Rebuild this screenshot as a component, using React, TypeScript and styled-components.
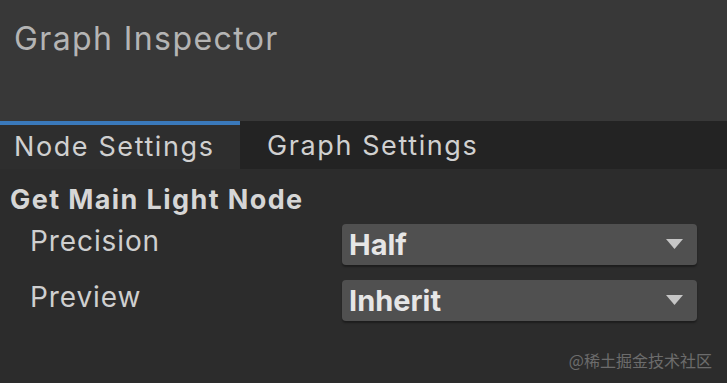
import React from "react";
import styled, { createGlobalStyle } from "styled-components";

const GlobalStyle = createGlobalStyle`
  html, body {
    margin: 0;
    padding: 0;
    background: #2c2c2c;
  }
  body {
    font-family: Inter, "Noto Sans", sans-serif;
  }
`;

const rows = [
  { label: "Precision", value: "Half" },
  { label: "Preview", value: "Inherit" },
];

export default function App() {
  return (
    <>
      <GlobalStyle />
      <Panel>
        <Header>
          <Title>Graph Inspector</Title>
        </Header>
        <TabBar>
          <Tab $active>Node Settings</Tab>
          <Tab>Graph Settings</Tab>
        </TabBar>
        <Body>
          <SectionTitle>Get Main Light Node</SectionTitle>
          {rows.map((r) => (
            <Row key={r.label}>
              <Label>{r.label}</Label>
              <Dropdown>
                <span>{r.value}</span>
                <Arrow viewBox="0 0 17 10">
                  <path d="M0 0 H17 L8.5 10 Z" fill="#c6c6c6" />
                </Arrow>
              </Dropdown>
            </Row>
          ))}
          <Footer>
            <Watermark>@稀土掘金技术社区</Watermark>
          </Footer>
        </Body>
      </Panel>
    </>
  );
}

const Panel = styled.div`
  width: 727px;
  height: 383px;
  display: flex;
  flex-direction: column;
  background: #2c2c2c;
  overflow: hidden;
`;

const Header = styled.div`
  height: 121px;
  box-sizing: border-box;
  background: #383838;
  padding: 23px 0 0 14px;
`;

const Title = styled.div`
  font-size: 32px;
  line-height: 32px;
  letter-spacing: 1.4px;
  color: #b4b4b4;
`;

const TabBar = styled.div`
  display: flex;
  height: 48px;
`;

const Tab = styled.div<{ $active?: boolean }>`
  box-sizing: border-box;
  display: flex;
  align-items: center;
  font-size: 27px;
  letter-spacing: 1.6px;
  color: #d0d0d0;
  padding-bottom: ${(p) => (p.$active ? "2px" : "0")};
  ${(p) =>
    p.$active
      ? `
    width: 240px;
    padding-left: 14px;
    border-top: 4px solid #3a79bb;
    background: #2e2e2e;
  `
      : `
    flex: 1;
    padding-left: 27px;
    background: #232323;
  `}
`;

const Body = styled.div`
  flex: 1;
  display: flex;
  flex-direction: column;
  padding: 14px 30px 0 10px;
`;

const SectionTitle = styled.div`
  font-size: 27px;
  font-weight: 700;
  line-height: 34px;
  letter-spacing: 1.4px;
  color: #d6d6d6;
  margin-bottom: 6px;
`;

const Row = styled.div`
  display: flex;
  align-items: center;
  height: 42px;
  margin-bottom: 14px;
`;

const Label = styled.div`
  width: 312px;
  padding-left: 20px;
  font-size: 28px;
  letter-spacing: 0.9px;
  color: #cfcfcf;
  margin-top: -6px;
`;

const Dropdown = styled.div`
  flex: 1;
  height: 41px;
  box-sizing: border-box;
  display: flex;
  align-items: center;
  justify-content: space-between;
  padding: 0 14px 0 7px;
  background: #505050;
  border-radius: 4px;
  box-shadow: 0 2px 2px rgba(0, 0, 0, 0.35);
  font-size: 29px;
  font-weight: 700;
  color: #e6e6e6;
`;

const Arrow = styled.svg`
  width: 17px;
  height: 10px;
`;

const Footer = styled.div`
  flex: 1;
  display: flex;
  justify-content: flex-end;
  align-items: flex-start;
  margin-right: -15px;
`;

const Watermark = styled.div`
  font-family: "Noto Sans CJK SC", "Noto Sans", sans-serif;
  font-size: 16px;
  color: #6c6c6c;
  margin-top: 13px;
`;
